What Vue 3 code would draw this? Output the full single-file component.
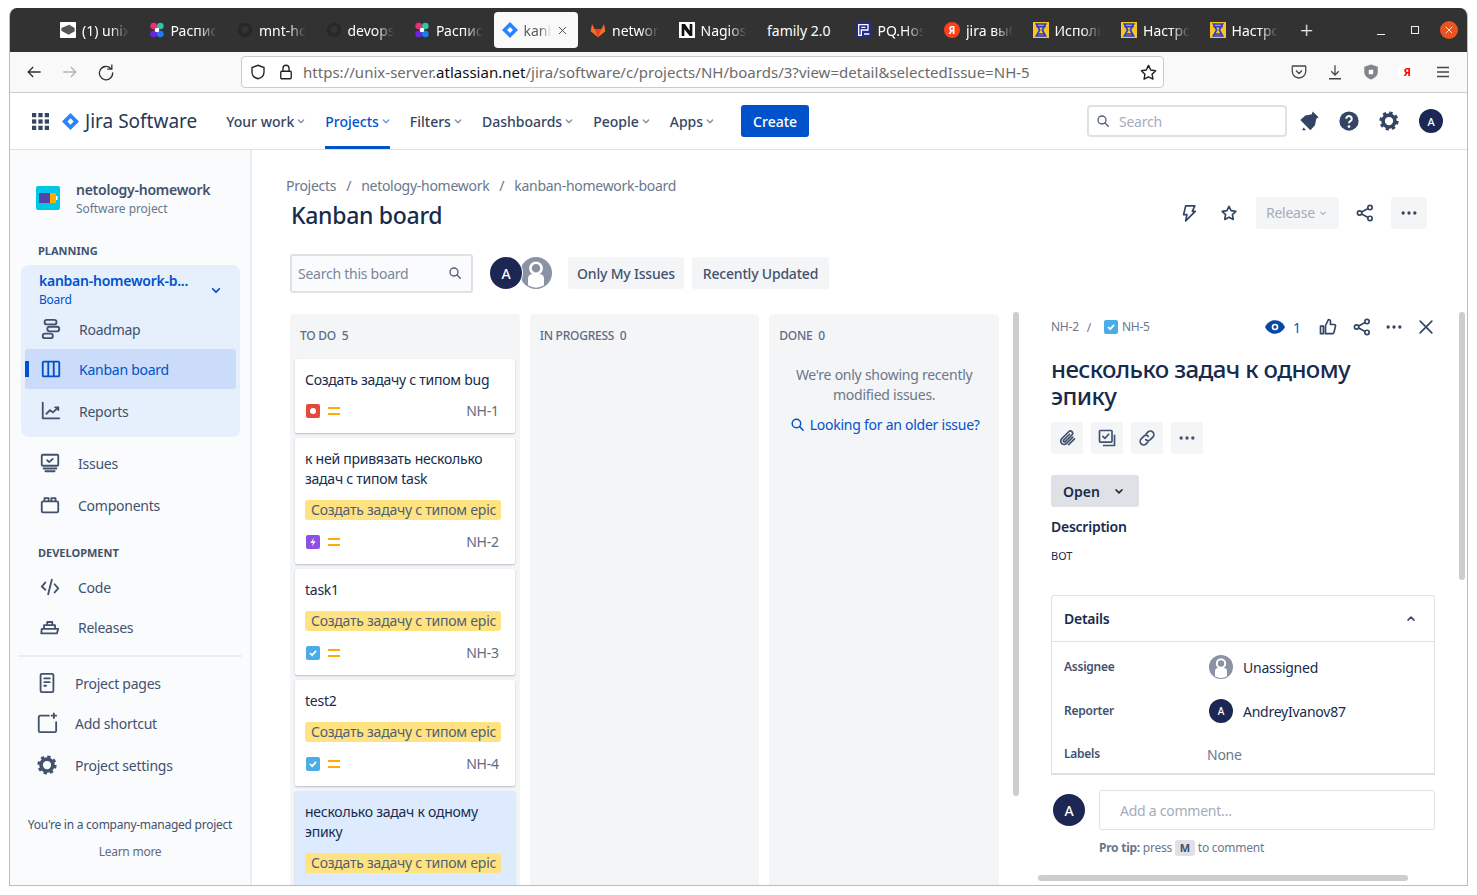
<template>
  <div class="window">
    <svg class="sprite">
      <symbol id="i-search" viewBox="0 0 24 24"><circle cx="10.5" cy="10.5" r="6" fill="none" stroke="currentColor" stroke-width="2"/><path d="M15 15l5 5" stroke="currentColor" stroke-width="2" stroke-linecap="round"/></symbol>
      <symbol id="i-chev" viewBox="0 0 24 24"><path d="M8 10.5l4 4 4-4" fill="none" stroke="currentColor" stroke-width="2" stroke-linecap="round" stroke-linejoin="round"/></symbol>
      <symbol id="i-share" viewBox="0 0 24 24"><g fill="none" stroke="currentColor" stroke-width="2"><circle cx="18" cy="5.5" r="2.6"/><circle cx="18" cy="18.5" r="2.6"/><circle cx="5.5" cy="12" r="2.6"/><path d="M8 10.7l7.7-4M8 13.3l7.7 4"/></g></symbol>
      <symbol id="i-more" viewBox="0 0 24 24"><circle cx="5" cy="12" r="2" fill="currentColor"/><circle cx="12" cy="12" r="2" fill="currentColor"/><circle cx="19" cy="12" r="2" fill="currentColor"/></symbol>
      <symbol id="i-star" viewBox="0 0 24 24"><path d="M12 4l2.5 5.2 5.7.8-4.1 4 1 5.7-5.1-2.7-5.1 2.7 1-5.7-4.1-4 5.7-.8z" fill="none" stroke="currentColor" stroke-width="2" stroke-linejoin="round"/></symbol>
      <symbol id="i-bolt" viewBox="0 0 24 24"><path d="M8 3.500h11l-3 6.500h3.500L8 21.500l1.500-7.500H5.500z" fill="none" stroke="currentColor" stroke-width="2" stroke-linejoin="round"/></symbol>
      <symbol id="i-clip" viewBox="0 0 24 24"><path d="M19 11l-7.500 7.500a4 4 0 0 1-6-5.500l8.500-8.500a2.700 2.700 0 0 1 4 3.800l-8 8a1.300 1.300 0 0 1-2-1.800l7-7" fill="none" stroke="currentColor" stroke-width="2" stroke-linecap="round"/><path d="M21 13l-7 7" stroke="currentColor" stroke-width="2" stroke-linecap="round"/></symbol>
      <symbol id="i-check" viewBox="0 0 24 24"><g fill="none" stroke="currentColor" stroke-width="2" stroke-linejoin="round"><rect x="3" y="3" width="15" height="14" rx="1"/><path d="M7 10l2.500 2.500L14 7.500" stroke-linecap="round"/><path d="M7 21h14V8"/></g></symbol>
      <symbol id="i-link" viewBox="0 0 24 24"><g fill="none" stroke="currentColor" stroke-width="2" stroke-linecap="round"><path d="M11 7l2-2a4 4 0 0 1 6 6l-3 3a4 4 0 0 1-5.500 0"/><path d="M13 17l-2 2a4 4 0 0 1-6-6l3-3a4 4 0 0 1 5.500 0"/></g></symbol>
      <symbol id="i-thumb" viewBox="0 0 24 24"><path d="M3 11h3.500v9H3zM9 20V10.500L12.500 3c1.700 0 2.500 1 2.500 2.500V9h4.500c1 0 1.800 1 1.500 2l-1.800 7.500c-.2 1-1 1.500-2 1.500z" fill="none" stroke="currentColor" stroke-width="2" stroke-linejoin="round"/></symbol>
      <symbol id="i-close" viewBox="0 0 24 24"><path d="M5 5l14 14M19 5L5 19" stroke="currentColor" stroke-width="2" stroke-linecap="round"/></symbol>
      <symbol id="i-road" viewBox="0 0 24 24"><g fill="none" stroke="currentColor" stroke-width="2"><rect x="5" y="2" width="13" height="5" rx="2.500"/><rect x="8" y="9.500" width="13" height="5" rx="2.500"/><rect x="3" y="17" width="11" height="5" rx="2.500"/></g></symbol>
      <symbol id="i-board" viewBox="0 0 24 24"><g fill="none" stroke="currentColor" stroke-width="2"><rect x="3" y="4" width="18" height="16" rx="1"/><path d="M9 4v16M15 4v16"/></g></symbol>
      <symbol id="i-reports" viewBox="0 0 24 24"><g fill="none" stroke="currentColor" stroke-width="2" stroke-linecap="round" stroke-linejoin="round"><path d="M3 3v17h18"/><path d="M7 15l4-4 3 2.500L20 8M16.500 8H20v3"/></g></symbol>
      <symbol id="i-issues" viewBox="0 0 24 24"><g fill="none" stroke="currentColor" stroke-width="2" stroke-linecap="round" stroke-linejoin="round"><rect x="3" y="3" width="18" height="12" rx="1"/><path d="M9 9l2 2 4-3.500M5 18h14M7 21h10"/></g></symbol>
      <symbol id="i-comp" viewBox="0 0 24 24"><g fill="none" stroke="currentColor" stroke-width="2" stroke-linejoin="round"><rect x="3" y="8" width="18" height="12" rx="1.500"/><path d="M6 8V4.500h4.500V8M13.500 8V4.500H18V8"/></g></symbol>
      <symbol id="i-code" viewBox="0 0 24 24"><g fill="none" stroke="currentColor" stroke-width="2" stroke-linecap="round" stroke-linejoin="round"><path d="M7 7l-4 4.500L7 15M17 9l4 4.500-4 4.500M14 4l-4 16"/></g></symbol>
      <symbol id="i-ship" viewBox="0 0 24 24"><g fill="none" stroke="currentColor" stroke-width="2" stroke-linejoin="round"><path d="M3 14h18l-1.500 5h-17z"/><path d="M5.500 14v-4h12v4M9 10V6.500h5.500V10"/></g></symbol>
      <symbol id="i-page" viewBox="0 0 24 24"><g fill="none" stroke="currentColor" stroke-width="2" stroke-linejoin="round"><rect x="5" y="2" width="14" height="20" rx="1.500"/><path d="M9 7h6M9 11h6M9 15h2" stroke-linecap="round"/></g></symbol>
      <symbol id="i-add" viewBox="0 0 24 24"><g fill="none" stroke="currentColor" stroke-width="2" stroke-linecap="round"><path d="M14 4H4.500C3.700 4 3 4.700 3 5.500v15c0 .8.7 1.500 1.500 1.500h16c.8 0 1.500-.7 1.500-1.500V11"/><path d="M19.500 1.500v5M17 4h5"/></g></symbol>
      <symbol id="i-gear" viewBox="0 0 24 24"><circle cx="12" cy="12" r="6.500" fill="none" stroke="currentColor" stroke-width="4"/><circle cx="12" cy="12" r="9" fill="none" stroke="currentColor" stroke-width="3" stroke-dasharray="3.600 3.470"/></symbol>
      <symbol id="i-person" viewBox="0 0 24 24"><circle cx="12" cy="12" r="12" fill="#8993a4"/><circle cx="12" cy="8.500" r="4.200" fill="none" stroke="#fff" stroke-width="2"/><path d="M6 16c0-2 1.500-3 3-3h6c1.500 0 3 1 3 3v5.200a11.500 11.500 0 0 1-12 0z" fill="#fff"/></symbol>
      <symbol id="i-diamond" viewBox="0 0 24 24"><path d="M12 0l12 12-12 12L0 12z" fill="#2684ff"/><path d="M12 7.500l4.500 4.500-4.500 4.500L7.500 12z" fill="#fff"/></symbol>
      <symbol id="i-octo" viewBox="0 0 24 24"><circle cx="12" cy="12" r="11" fill="#24292e"/><circle cx="12" cy="11" r="5.500" fill="#333"/></symbol>
      <symbol id="i-dots" viewBox="0 0 24 24"><circle cx="7" cy="6" r="5" fill="#ef2b7c"/><circle cx="17" cy="6" r="5" fill="#2fc6a3"/><circle cx="7" cy="18" r="5" fill="#6a24e8"/><circle cx="17" cy="18" r="5" fill="#1b7cf5"/><circle cx="12" cy="12" r="3.500" fill="#fff"/></symbol>
      <symbol id="i-drive" viewBox="0 0 24 24"><rect width="24" height="24" rx="1" fill="#fff"/><path d="M2 9l12-5 8 5v5l-9 5-11-6z" fill="#555"/></symbol>
      <symbol id="i-fox" viewBox="0 0 24 24"><path d="M12 23L1 14l2-11 4 8h10l4-8 2 11z" fill="#fc6d26"/><path d="M12 23L7 11h10z" fill="#e24329"/></symbol>
      <symbol id="i-n" viewBox="0 0 24 24"><rect width="24" height="24" fill="#fff"/><path d="M4 3h5l7 10V3h4v18h-4L8 11v10H4z" fill="#111"/></symbol>
      <symbol id="i-pq" viewBox="0 0 24 24"><rect width="24" height="24" fill="#2b2a83"/><path d="M4 4h14v8H8v8H4zM8 8h6" fill="none" stroke="#fff" stroke-width="2"/><path d="M12 18h8" stroke="#fff" stroke-width="2"/></symbol>
      <symbol id="i-hm" viewBox="0 0 24 24"><rect width="24" height="24" fill="#f8c42c"/><path d="M5 3h14l-5 9 5 9H5l5-9zM5 7h14M6 18h12" fill="none" stroke="#2b39c9" stroke-width="2.400"/></symbol>
    </svg>

    <div class="tabbar">
      <div v-for="tab in tabs" :key="tab.id" class="tab" :class="{ active: tab.active, plain: !tab.icon && !tab.ya }">
        <span v-if="tab.ya" class="ya-fav">Я</span>
        <svg v-else-if="tab.icon" class="fav"><use :href="'#i-' + tab.icon" /></svg>
        <span class="tab-title">{{ tab.title }}</span>
        <svg v-if="tab.active" class="tab-x"><use href="#i-close" /></svg>
      </div>
      <span class="plus">+</span>
      <div class="win-btns">
        <span class="w-min"></span>
        <span class="w-max"></span>
        <span class="w-close">
          <svg width="10" height="10"><use href="#i-close" /></svg>
        </span>
      </div>
    </div>

    <div class="toolbar">
      <svg class="tb-ic" viewBox="0 0 24 24"><path d="M20 12H5M11 6l-6 6 6 6" fill="none" stroke="currentColor" stroke-width="1.600"/></svg>
      <svg class="tb-ic dim" viewBox="0 0 24 24"><path d="M4 12h15M13 6l6 6-6 6" fill="none" stroke="currentColor" stroke-width="1.600"/></svg>
      <svg class="tb-ic" viewBox="0 0 24 24"><path d="M18 8a8 8 0 1 0 2 4.500M19 3v5.500h-5.500" fill="none" stroke="currentColor" stroke-width="1.600"/></svg>
      <div class="urlbar">
        <svg class="url-ic" viewBox="0 0 24 24"><path d="M12 3l8 3v6c0 5-4 8-8 9-4-1-8-4-8-9V6z" fill="none" stroke="currentColor" stroke-width="1.800"/></svg>
        <svg class="url-ic lock" viewBox="0 0 24 24"><rect x="5" y="11" width="14" height="10" rx="1.500" fill="none" stroke="currentColor" stroke-width="1.800"/><path d="M8 11V7a4 4 0 0 1 8 0v4" fill="none" stroke="currentColor" stroke-width="1.800"/></svg>
        <span class="url"><span>https://unix-server.</span><b>atlassian.net</b><span>/jira/software/c/projects/NH/boards/3?view=detail&amp;selectedIssue=NH-5</span></span>
        <svg class="url-star" viewBox="0 0 24 24"><path d="M12 3l2.800 5.800 6.200.9-4.500 4.400 1.100 6.300-5.600-3-5.600 3 1.100-6.300L3 9.700l6.200-.9z" fill="none" stroke="#222" stroke-width="1.800" stroke-linejoin="round"/></svg>
      </div>
      <div class="tb-right">
        <svg class="tb-ic2" viewBox="0 0 24 24"><path d="M4 4h16a1 1 0 0 1 1 1v6a9 9 0 0 1-18 0V5a1 1 0 0 1 1-1zM8 10l4 4 4-4" fill="none" stroke="currentColor" stroke-width="1.700"/></svg>
        <svg class="tb-ic2" viewBox="0 0 24 24"><path d="M12 3v13M7 11l5 5 5-5M4 21h16" fill="none" stroke="currentColor" stroke-width="1.700"/></svg>
        <svg class="tb-ic2" viewBox="0 0 24 24"><path d="M12 2l9 3v7c0 5-4 8-9 10-5-2-9-5-9-10V5z" fill="#80868b"/><rect x="9" y="9" width="6" height="6" rx="1" fill="#fff"/></svg>
        <span class="ya-ext">Я</span>
        <svg class="tb-ic2" viewBox="0 0 24 24"><path d="M4 6h16M4 12h16M4 18h16" stroke="currentColor" stroke-width="1.800"/></svg>
      </div>
    </div>

    <header class="jnav">
      <svg class="apps" viewBox="0 0 16 16"><g fill="#344563"><rect x="0" y="0" width="4" height="4"/><rect x="6" y="0" width="4" height="4"/><rect x="12" y="0" width="4" height="4"/><rect x="0" y="6" width="4" height="4"/><rect x="6" y="6" width="4" height="4"/><rect x="12" y="6" width="4" height="4"/><rect x="0" y="12" width="4" height="4"/><rect x="6" y="12" width="4" height="4"/><rect x="12" y="12" width="4" height="4"/></g></svg>
      <svg class="logo"><use href="#i-diamond" /></svg>
      <span class="brand">Jira Software</span>
      <nav class="nav-items">
        <a v-for="n in navItems" :key="n" class="nav-item" :class="{ current: n === 'Projects' }">
          {{ n }}<svg class="nav-chev"><use href="#i-chev" /></svg>
        </a>
      </nav>
      <button class="create">Create</button>
      <div class="top-search">
        <svg class="ts-ic"><use href="#i-search" /></svg>
        <span>Search</span>
      </div>
      <svg class="top-ic" viewBox="0 0 24 24"><path d="M16 1.500l6.500 6.500-2.500 1.500-1.500 7-5 5.500-11-11 5.500-5 7-1.500zM4.500 22l1.500-3 3 3z" fill="#344563"/></svg>
      <svg class="top-ic" viewBox="0 0 24 24"><circle cx="12" cy="12" r="10.500" fill="#344563"/><path d="M9 9.500a3 3 0 1 1 4.500 2.600c-1 .6-1.500 1-1.500 2.400" fill="none" stroke="#fff" stroke-width="2.200"/><circle cx="12" cy="18" r="1.500" fill="#fff"/></svg>
      <svg class="top-ic gear"><use href="#i-gear" /></svg>
      <span class="avatar top-av">A</span>
    </header>

    <div class="body">
      <aside class="sidebar">
        <div class="proj">
          <svg class="proj-ic" viewBox="0 0 24 24"><rect width="24" height="24" rx="2" fill="#00c7e6"/><rect x="3" y="7" width="11" height="10" fill="#5243aa"/><rect x="14" y="7" width="6" height="10" fill="#ffab00"/><rect x="20" y="10" width="1.500" height="4" fill="#fff"/></svg>
          <div>
            <div class="proj-name">netology-homework</div>
            <div class="proj-type">Software project</div>
          </div>
        </div>
        <div class="sec-title">PLANNING</div>
        <div class="panel">
          <div class="panel-head">
            <div>
              <div class="panel-name">kanban-homework-b...</div>
              <div class="panel-sub">Board</div>
            </div>
            <svg class="panel-chev"><use href="#i-chev" /></svg>
          </div>
          <div class="p-item roadmap"><svg class="s-ic"><use href="#i-road" /></svg>Roadmap</div>
          <div class="p-item sel"><svg class="s-ic"><use href="#i-board" /></svg>Kanban board</div>
          <div class="p-item reports"><svg class="s-ic"><use href="#i-reports" /></svg>Reports</div>
        </div>
        <div class="s-item first"><svg class="s-ic"><use href="#i-issues" /></svg>Issues</div>
        <div class="s-item"><svg class="s-ic"><use href="#i-comp" /></svg>Components</div>
        <div class="sec-title dev">DEVELOPMENT</div>
        <div class="s-item code"><svg class="s-ic"><use href="#i-code" /></svg>Code</div>
        <div class="s-item rel"><svg class="s-ic"><use href="#i-ship" /></svg>Releases</div>
        <div class="s-div"></div>
        <div class="s-item alt"><svg class="s-ic"><use href="#i-page" /></svg>Project pages</div>
        <div class="s-item alt two"><svg class="s-ic"><use href="#i-add" /></svg>Add shortcut</div>
        <div class="s-item alt three"><svg class="s-ic"><use href="#i-gear" /></svg>Project settings</div>
        <div class="managed">You're in a company-managed project</div>
        <div class="learn">Learn more</div>
      </aside>

      <main class="main">
        <div class="crumbs">
          <span>Projects</span><i>/</i><span>netology-homework</span><i>/</i><span>kanban-homework-board</span>
        </div>
        <div class="title-row">
          <h1>Kanban board</h1>
          <div class="title-acts">
            <svg class="act-ic bolt"><use href="#i-bolt" /></svg>
            <svg class="act-ic star"><use href="#i-star" /></svg>
            <span class="release">Release<svg class="rel-chev"><use href="#i-chev" /></svg></span>
            <svg class="act-ic share"><use href="#i-share" /></svg>
            <span class="more-btn"><svg class="act-ic"><use href="#i-more" /></svg></span>
          </div>
        </div>
        <div class="filters">
          <div class="board-search">
            <span>Search this board</span>
            <svg class="bs-ic"><use href="#i-search" /></svg>
          </div>
          <span class="avatar av32">A</span>
          <svg class="av-person"><use href="#i-person" /></svg>
          <button class="qf first-qf">Only My Issues</button>
          <button class="qf second-qf">Recently Updated</button>
        </div>

        <div class="work">
          <div class="columns">
            <section class="col">
              <div class="col-head">TO DO&nbsp; 5</div>
              <article v-for="c in cards" :key="c.key" class="card" :class="{ picked: c.picked }">
                <div class="card-title">{{ c.title }}</div>
                <div v-if="c.epic" class="epic">Создать задачу с типом epic</div>
                <div class="card-foot">
                  <span class="type" :class="c.type">
                    <svg v-if="c.type === 'bug'" viewBox="0 0 16 16"><circle cx="8" cy="8" r="3.500" fill="#fff"/></svg>
                    <svg v-else-if="c.type === 'epic-t'" viewBox="0 0 16 16"><path d="M9 3L5 9h3l-1 4 4-6H8z" fill="#fff"/></svg>
                    <svg v-else viewBox="0 0 16 16"><path d="M4.500 8l2.500 2.500 4.500-5" fill="none" stroke="#fff" stroke-width="2"/></svg>
                  </span>
                  <span class="prio"></span>
                  <span class="key">{{ c.key }}</span>
                </div>
              </article>
            </section>
            <section class="col">
              <div class="col-head">IN PROGRESS&nbsp; 0</div>
            </section>
            <section class="col">
              <div class="col-head">DONE&nbsp; 0</div>
              <p class="done-msg">We're only showing recently modified issues.</p>
              <a class="older"><svg class="older-ic"><use href="#i-search" /></svg>Looking for an older issue?</a>
            </section>
          </div>

          <aside class="detail">
            <div class="d-top">
              <span class="d-crumb">NH-2</span><i class="d-slash">/</i>
              <span class="type task d-type"><svg viewBox="0 0 16 16"><path d="M4.500 8l2.500 2.500 4.500-5" fill="none" stroke="#fff" stroke-width="2"/></svg></span>
              <span class="d-crumb">NH-5</span>
              <div class="d-acts">
                <svg class="eye" viewBox="0 0 24 16"><path d="M12 0c6 0 10 4 12 8-2 4-6 8-12 8S2 12 0 8c2-4 6-8 12-8z" fill="#0747a6"/><circle cx="12" cy="8" r="4" fill="#fff"/><circle cx="12" cy="8" r="2" fill="#0747a6"/></svg>
                <span class="watch">1</span>
                <svg class="d-ic thumb"><use href="#i-thumb" /></svg>
                <svg class="d-ic d-share"><use href="#i-share" /></svg>
                <svg class="d-ic"><use href="#i-more" /></svg>
                <svg class="d-ic"><use href="#i-close" /></svg>
              </div>
            </div>
            <h2>несколько задач к одному эпику</h2>
            <div class="d-btns">
              <span v-for="b in detailBtns" :key="b" class="d-btn"><svg><use :href="'#i-' + b" /></svg></span>
            </div>
            <button class="status">Open<svg class="st-chev"><use href="#i-chev" /></svg></button>
            <h3>Description</h3>
            <p class="descr">ВОТ</p>
            <div class="details">
              <div class="det-head">Details<svg class="det-chev"><use href="#i-chev" /></svg></div>
              <div class="det-row assignee">
                <span class="det-label">Assignee</span>
                <svg class="det-av"><use href="#i-person" /></svg>
                <span class="det-val">Unassigned</span>
              </div>
              <div class="det-row reporter">
                <span class="det-label">Reporter</span>
                <span class="avatar det-a">A</span>
                <span class="det-val">AndreyIvanov87</span>
              </div>
              <div class="det-row labels">
                <span class="det-label">Labels</span>
                <span class="none">None</span>
              </div>
            </div>
            <div class="comment">
              <span class="avatar av32">A</span>
              <div class="comment-box">Add a comment…</div>
            </div>
            <div class="tip"><b>Pro tip:</b> press <kbd>M</kbd> to comment</div>
          </aside>
        </div>
      </main>
      <span class="sb sb-a"></span>
      <span class="sb sb-b"></span>
      <span class="sb sb-c"></span>
    </div>
  </div>
</template>

<script setup>
const tabs = [
  { id: 1, title: '(1) unix', icon: 'drive' },
  { id: 2, title: 'Расписание', icon: 'dots' },
  { id: 3, title: 'mnt-homework', icon: 'octo' },
  { id: 4, title: 'devops-netology', icon: 'octo' },
  { id: 5, title: 'Расписание', icon: 'dots' },
  { id: 6, title: 'kanban', icon: 'diamond', active: true },
  { id: 7, title: 'network', icon: 'fox' },
  { id: 8, title: 'Nagios', icon: 'n' },
  { id: 9, title: 'family 2.0' },
  { id: 10, title: 'PQ.Hosting', icon: 'pq' },
  { id: 11, title: 'jira выбор', ya: true },
  { id: 12, title: 'Использование', icon: 'hm' },
  { id: 13, title: 'Настройка', icon: 'hm' },
  { id: 14, title: 'Настройка', icon: 'hm' }
]

const navItems = ['Your work', 'Projects', 'Filters', 'Dashboards', 'People', 'Apps']

const epic = true
const cards = [
  { key: 'NH-1', title: 'Создать задачу с типом bug', type: 'bug' },
  { key: 'NH-2', title: 'к ней привязать несколько задач с типом task', epic, type: 'epic-t' },
  { key: 'NH-3', title: 'task1', epic, type: 'task' },
  { key: 'NH-4', title: 'test2', epic, type: 'task' },
  { key: 'NH-5', title: 'несколько задач к одному эпику', epic, type: 'task', picked: true }
]

const detailBtns = ['clip', 'check', 'link', 'more']
</script>

<style>
html, body {
  margin: 0;
  background: #fff;
  overflow: hidden;
}
</style>

<style scoped>
* {
  box-sizing: border-box;
}

.window {
  position: relative;
  width: 1459px;
  height: 878px;
  margin: 8px 0 0 9px;
  border: 1px solid #bdbdbd;
  border-top: 0;
  border-radius: 8px 8px 0 0;
  overflow: hidden;
  display: flex;
  flex-direction: column;
  font-family: "Noto Sans", "Noto Sans CJK SC", sans-serif;
  font-size: 14px;
  letter-spacing: -0.25px;
  color: #42526e;
  background: #fff;
}

.sprite {
  display: none;
}

/* browser chrome */
.tabbar {
  height: 44px;
  flex: none;
  background: #333232;
  display: flex;
  align-items: center;
  padding-left: 40px;
  color: #fff;
  letter-spacing: 0;
}

.tab {
  width: 88.5px;
  height: 36px;
  flex: none;
  padding: 0 10px;
  display: flex;
  align-items: center;
  gap: 6px;
  overflow: hidden;
}

.tab.active {
  background: #f9f9fa;
  color: #5b5b66;
  border-radius: 4px;
  width: 84.500px;
  margin: 0 2px 0 1px;
  padding: 0 8px;
}

.fav {
  width: 16px;
  height: 16px;
  flex: none;
}

.ya-fav {
  width: 16px;
  height: 16px;
  flex: none;
  border-radius: 50%;
  background: #fc3f1d;
  color: #fff;
  font-size: 10px;
  font-weight: 700;
  text-align: center;
  line-height: 16px;
}

.tab-title {
  flex: 1;
  min-width: 0;
  white-space: nowrap;
  overflow: hidden;
  font-size: 14px;
  -webkit-mask-image: linear-gradient(90deg, #000 60%, transparent 100%);
  mask-image: linear-gradient(90deg, #000 60%, transparent 100%);
}

.plain .tab-title {
  -webkit-mask-image: none;
  mask-image: none;
}

.tab-x {
  width: 11px;
  height: 11px;
  flex: none;
  margin-right: 2px;
  color: #444;
}

.plus {
  margin-left: 12px;
  font-size: 23px;
  font-weight: 300;
  line-height: 1;
  color: #eee;
}

.win-btns {
  margin-left: auto;
  display: flex;
  align-items: center;
  gap: 21px;
  padding-right: 9px;
}

.w-min {
  width: 8px;
  height: 1px;
  background: #eee;
  margin-top: 8px;
}

.w-max {
  width: 8px;
  height: 8px;
  border: 1px solid #eee;
  margin-left: 5px;
}

.w-close {
  width: 18px;
  height: 18px;
  border-radius: 50%;
  background: #e95420;
  display: flex;
  align-items: center;
  justify-content: center;
  color: #fff;
}

.toolbar {
  height: 41px;
  flex: none;
  background: #f9f9fa;
  border-bottom: 1px solid #ccc;
  display: flex;
  align-items: center;
  padding: 0 15px 0 14px;
  color: #333;
}

.tb-ic {
  width: 20px;
  height: 20px;
  margin-right: 16px;
  flex: none;
}

.tb-ic.dim {
  color: #b3b3b3;
}

.urlbar {
  margin-left: 109px;
  width: 923px;
  height: 32px;
  background: #fff;
  border: 1px solid #ccc;
  border-radius: 4px;
  display: flex;
  align-items: center;
  padding: 0 5px 0 7px;
  color: #222;
}

.url-ic {
  width: 18px;
  height: 18px;
  flex: none;
}

.lock {
  margin-left: 10px;
}

.url {
  margin-left: 8px;
  flex: 1;
  white-space: nowrap;
  font-size: 15px;
  letter-spacing: 0.02px;
  color: #6b6b6b;
}

.url b {
  font-weight: 400;
  color: #111;
}

.url-star {
  width: 19px;
  height: 19px;
}

.tb-right {
  margin-left: auto;
  display: flex;
  align-items: center;
  gap: 18px;
  color: #444;
}

.tb-ic2 {
  width: 18px;
  height: 18px;
}

.ya-ext {
  width: 18px;
  height: 18px;
  border-radius: 50%;
  background: #fff;
  text-align: center;
  color: #f00;
  font-size: 11px;
  font-weight: 700;
  line-height: 18px;
}

/* jira nav */
.jnav {
  height: 57px;
  flex: none;
  background: #fff;
  border-bottom: 1px solid #dfe1e6;
  display: flex;
  align-items: center;
  padding-left: 22px;
}

.apps {
  width: 17px;
  height: 17px;
}

.logo {
  width: 17px;
  height: 17px;
  margin-left: 13px;
}

.brand {
  margin-left: 6px;
  font-size: 19px;
  letter-spacing: 0;
  color: #253858;
  white-space: nowrap;
}

.nav-items {
  margin-left: 29px;
  display: flex;
  align-self: stretch;
  letter-spacing: 0;
}

.nav-item {
  display: flex;
  align-items: center;
  font-weight: 500;
  color: #344563;
  margin-right: 20px;
  border-bottom: 3px solid transparent;
  border-top: 3px solid transparent;
  white-space: nowrap;
}

.nav-item.current {
  color: #0052cc;
  border-bottom-color: #0052cc;
}

.nav-chev {
  width: 16px;
  height: 16px;
  margin-left: -1px;
  opacity: 0.6;
  margin-right: -4px;
}

.create {
  margin-left: 7px;
  width: 68px;
  height: 32px;
  padding: 1px 0 0;
  background: #0052cc;
  color: #fff;
  border: 0;
  border-radius: 3px;
  font: 500 14px "Noto Sans", sans-serif;
}

.top-search {
  margin-left: auto;
  width: 200px;
  height: 32px;
  border: 2px solid #dfe1e6;
  border-radius: 4px;
  display: flex;
  align-items: center;
  gap: 8px;
  padding-left: 6px;
  color: #a5adba;
}

.ts-ic {
  width: 16px;
  height: 16px;
  color: #505f79;
}

.top-ic {
  width: 22px;
  height: 22px;
  margin-left: 18px;
  color: #344563;
}

.top-search + .top-ic {
  margin-left: 11px;
}

.avatar {
  border-radius: 50%;
  background: #1c2754;
  color: #fff;
  display: inline-flex;
  align-items: center;
  justify-content: center;
  font-weight: 500;
  flex: none;
}

.top-av {
  width: 24px;
  height: 24px;
  font-size: 11px;
  margin: 0 24px 0 19px;
}

/* body */
.body {
  position: relative;
  flex: 1;
  min-height: 0;
  display: flex;
}

.sidebar {
  width: 242px;
  flex: none;
  background: #fafbfc;
  border-right: 2px solid #ebecf0;
  padding: 30px 8px 0;
}

.proj {
  display: flex;
  align-items: center;
  gap: 16px;
  padding-left: 18px;
}

.proj-ic {
  width: 24px;
  height: 24px;
  flex: none;
  margin-top: -2px;
}

.proj-name {
  font-weight: 600;
  color: #42526e;
  line-height: 20px;
}

.proj-type {
  font-size: 12px;
  letter-spacing: -0.05px;
  color: #6b778c;
  line-height: 17px;
}

.sec-title {
  margin: 26px 0 0 20px;
  font-size: 11px;
  font-weight: 700;
  letter-spacing: 0;
  color: #42526e;
  line-height: 16px;
}

.panel {
  margin: 6px 2px 0 3px;
  height: 172px;
  background: #e6effc;
  border-radius: 8px;
  padding: 6px 4px 0;
}

.panel-head {
  display: flex;
  align-items: center;
  justify-content: space-between;
  padding: 0 10px 0 14px;
}

.panel-name {
  font-weight: 600;
  color: #0052cc;
  line-height: 20px;
}

.panel-sub {
  font-size: 12px;
  color: #0052cc;
  line-height: 18px;
}

.panel-chev {
  width: 20px;
  height: 20px;
  color: #0052cc;
}

.p-item {
  display: flex;
  align-items: center;
  height: 40px;
  padding-left: 15px;
  position: relative;
}

.roadmap {
  height: 34px;
  margin-top: 3px;
  margin-bottom: 3px;
}

.sel {
  background: #cadcf9;
  border-radius: 3px;
  color: #0052cc;
}

.sel::before {
  content: "";
  position: absolute;
  left: 0;
  top: 12px;
  width: 4px;
  height: 16px;
  background: #0052cc;
}

.reports {
  height: 44px;
}

.s-ic {
  width: 22px;
  height: 22px;
  margin-right: 17px;
  flex: none;
}

.s-item {
  display: flex;
  align-items: center;
  height: 42px;
  padding-left: 21px;
}

.first {
  margin-top: 5px;
}

.sec-title.dev {
  margin-top: 19px;
}

.code {
  height: 40px;
  margin-top: 6px;
}

.rel {
  height: 40px;
}

.s-div {
  height: 2px;
  margin: 8px 0 6px;
  background: #ebecf0;
}

.s-item.alt {
  padding-left: 18px;
  height: 40px;
}

.alt.three {
  height: 44px;
}

.managed {
  margin-top: 30px;
  font-size: 12px;
  text-align: center;
  white-space: nowrap;
  line-height: 16px;
}

.learn {
  margin-top: 11px;
  font-size: 12px;
  text-align: center;
  color: #5e6c84;
  line-height: 16px;
}

/* main */
.main {
  flex: 1;
  min-width: 0;
  display: flex;
  flex-direction: column;
  padding-left: 34px;
  overflow: hidden;
}

.crumbs {
  margin-top: 26px;
  line-height: 20px;
  letter-spacing: -0.28px;
  color: #6b778c;
  white-space: nowrap;
}

.crumbs i {
  font-style: normal;
  margin: 0 10px;
}

.title-row {
  display: flex;
  align-items: center;
  justify-content: space-between;
  margin-top: 3px;
  height: 36px;
  padding: 0 40px 0 5px;
}

h1 {
  margin: -5px 0 0;
  font-size: 23px;
  font-weight: 500;
  letter-spacing: -0.3px;
  color: #172b4d;
  line-height: 32px;
}

.title-acts {
  display: flex;
  align-items: center;
  margin-top: -9px;
  color: #344563;
}

.act-ic {
  width: 20px;
  height: 20px;
}

.star {
  margin-left: 20px;
}

.release {
  margin-left: 17px;
  width: 83px;
  height: 32px;
  background: #f4f5f7;
  border-radius: 3px;
  display: flex;
  align-items: center;
  padding-left: 10px;
  color: #a5adba;
  white-space: nowrap;
}

.rel-chev {
  width: 14px;
  height: 14px;
  margin-left: 1px;
}

.share {
  margin-left: 16px;
}

.more-btn {
  margin-left: 16px;
  width: 36px;
  height: 32px;
  background: #f4f5f7;
  border-radius: 3px;
  display: flex;
  align-items: center;
  justify-content: center;
}

.filters {
  margin-top: 18px;
  height: 40px;
  display: flex;
  align-items: center;
  padding-left: 4px;
}

.board-search {
  width: 183px;
  height: 39px;
  border: 2px solid #dfe1e6;
  border-radius: 3px;
  background: #fafbfc;
  display: flex;
  align-items: center;
  justify-content: space-between;
  padding: 0 8px 0 6px;
  color: #7a869a;
  white-space: nowrap;
}

.bs-ic {
  width: 16px;
  height: 16px;
  color: #505f79;
}

.av32 {
  width: 32px;
  height: 32px;
  font-size: 14px;
}

.filters .av32 {
  margin-left: 17px;
  z-index: 1;
  box-shadow: 0 0 0 1px #fff;
}

.av-person {
  width: 32px;
  height: 32px;
  margin-left: -2px;
}

.qf {
  height: 32px;
  border: 0;
  border-radius: 3px;
  background: #f4f5f7;
  color: #42526e;
  font: 500 14px "Noto Sans", sans-serif;
  letter-spacing: -0.2px;
  padding: 0;
  white-space: nowrap;
}

.first-qf {
  margin-left: 16px;
  width: 116px;
}

.second-qf {
  margin-left: 8px;
  width: 137px;
}

.work {
  flex: 1;
  min-height: 0;
  margin-top: 21px;
  display: flex;
}

.columns {
  width: 709px;
  margin-left: 4px;
  flex: none;
  display: flex;
  gap: 10px;
}

.col {
  flex: 1 1 0;
  min-width: 0;
  background: #f4f5f7;
  border-radius: 4px 4px 0 0;
  padding: 0 5px;
}

.col-head {
  height: 45px;
  padding: 13px 5px 0;
  font-size: 12px;
  font-weight: 500;
  color: #5e6c84;
  line-height: 18px;
}

.card {
  background: #fff;
  border-radius: 2px;
  box-shadow: 0 1px 2px rgba(9, 30, 66, 0.25);
  padding: 11px 14px 12px 10px;
  margin-bottom: 5px;
}

.card.picked {
  background: #deebff;
}

.card-title {
  color: #172b4d;
  line-height: 20px;
}

.epic {
  margin-top: 11px;
  height: 20px;
  line-height: 20px;
  background: #ffe380;
  border-radius: 3px;
  padding: 0 5px 0 6px;
  color: #505f79;
  white-space: nowrap;
  overflow: hidden;
}

.card-foot {
  margin-top: 12px;
  height: 20px;
  display: flex;
  align-items: center;
  padding: 0 2px 0 1px;
}

.card-title + .card-foot {
  margin-top: 11px;
}

.type {
  width: 14px;
  height: 14px;
  border-radius: 2px;
  display: inline-flex;
  flex: none;
}

.type svg {
  width: 14px;
  height: 14px;
}

.bug {
  background: #e5493a;
}

.epic-t {
  background: #904ee2;
}

.task {
  background: #4bade8;
}

.prio {
  width: 12px;
  height: 8px;
  margin-left: 8px;
  border-top: 2px solid #ffab00;
  border-bottom: 2px solid #ffab00;
}

.key {
  margin: -1px 0 0 auto;
  color: #5e6c84;
}

.done-msg {
  margin: 6px auto 0;
  padding: 0 10px;
  width: 210px;
  text-align: center;
  line-height: 20px;
  color: #6b778c;
}

.older {
  display: flex;
  align-items: center;
  justify-content: center;
  margin-top: 10px;
  color: #0052cc;
  white-space: nowrap;
  gap: 4px;
}

.older-ic {
  width: 17px;
  height: 17px;
}

/* issue panel */
.detail {
  margin-left: 52px;
  width: 384px;
  flex: none;
}

.d-top {
  height: 26px;
  display: flex;
  align-items: center;
  font-size: 12px;
  color: #6b778c;
}

.d-crumb {
  line-height: 16px;
}

.d-slash {
  font-style: normal;
  margin: 0 13px 0 8px;
}

.d-type {
  margin-right: 4px;
}

.d-acts {
  margin-left: auto;
  margin-right: -1px;
  display: flex;
  align-items: center;
  color: #344563;
}

.eye {
  width: 20px;
  height: 14px;
}

.watch {
  margin-left: 8px;
  font-size: 14px;
  color: #0052cc;
  width: 14px;
}

.d-ic {
  width: 20px;
  height: 20px;
  margin-left: 12px;
}

.thumb {
  margin-left: 11px;
}

.d-share {
  margin-left: 14px;
}

h2 {
  margin: 15px 0 0;
  max-width: 320px;
  font-size: 24px;
  font-weight: 500;
  letter-spacing: -0.6px;
  line-height: 27px;
  color: #172b4d;
}

.d-btns {
  margin-top: 13px;
  display: flex;
  gap: 8px;
}

.d-btn {
  width: 32px;
  height: 32px;
  background: #f4f5f7;
  border-radius: 3px;
  display: flex;
  align-items: center;
  justify-content: center;
  color: #42526e;
}

.d-btn svg {
  width: 20px;
  height: 20px;
}

.status {
  margin-top: 21px;
  width: 88px;
  height: 32px;
  border: 0;
  border-radius: 3px;
  background: #dfe1e6;
  color: #172b4d;
  font: 600 14px "Noto Sans", sans-serif;
  display: flex;
  align-items: center;
  padding-left: 12px;
}

.st-chev {
  width: 18px;
  height: 18px;
  margin-left: 10px;
}

h3 {
  margin: 10px 0 0;
  font-size: 14px;
  font-weight: 600;
  line-height: 20px;
  color: #172b4d;
}

.descr {
  margin: 11px 0 0;
  font-size: 11px;
  line-height: 16px;
  letter-spacing: 0;
  color: #172b4d;
}

.details {
  margin-top: 31px;
  height: 180px;
  border: 1px solid #dfe1e6;
  border-bottom-width: 2px;
  border-radius: 3px 3px 0 0;
  overflow: hidden;
}

.det-head {
  height: 46px;
  border-bottom: 1px solid #dfe1e6;
  display: flex;
  align-items: center;
  justify-content: space-between;
  padding: 0 14px 0 12px;
  font-weight: 600;
  color: #172b4d;
}

.det-chev {
  width: 18px;
  height: 18px;
  transform: rotate(180deg);
  color: #344563;
}

.det-row {
  height: 44px;
  display: flex;
  align-items: center;
  padding-left: 12px;
  color: #172b4d;
}

.assignee {
  margin-top: 3px;
}

.labels {
  height: 43px;
}

.det-label {
  width: 145px;
  font-size: 12px;
  font-weight: 600;
  color: #42526e;
  flex: none;
  margin-top: -2px;
}

.det-av {
  width: 24px;
  height: 24px;
  flex: none;
}

.det-a {
  width: 24px;
  height: 24px;
  font-size: 10px;
}

.det-val {
  margin-left: 10px;
}

.none {
  margin-left: -2px;
  color: #6b778c;
}

.comment {
  margin-top: 15px;
  display: flex;
  align-items: center;
  padding-left: 2px;
}

.comment-box {
  margin-left: 14px;
  flex: 1;
  height: 40px;
  border: 1px solid #dfe1e6;
  border-radius: 3px;
  display: flex;
  align-items: center;
  padding-left: 20px;
  color: #a5adba;
}

.tip {
  margin: 8px 0 0 48px;
  font-size: 12px;
  line-height: 20px;
  color: #6b778c;
}

.tip b {
  font-weight: 700;
}

kbd {
  display: inline-block;
  font: 700 11px "Noto Sans", sans-serif;
  background: #dfe1e6;
  color: #42526e;
  border-radius: 3px;
  padding: 0 5px;
  line-height: 16px;
}

/* overlay scrollbars */
.sb {
  position: absolute;
  background: #cdcdcd;
  border-radius: 3px;
}

.sb-a {
  left: 1003px;
  top: 162px;
  width: 6px;
  height: 484px;
}

.sb-b {
  left: 1449px;
  top: 162px;
  width: 6px;
  height: 268px;
}

.sb-c {
  left: 1028px;
  top: 725px;
  width: 370px;
  height: 6px;
}
</style>
